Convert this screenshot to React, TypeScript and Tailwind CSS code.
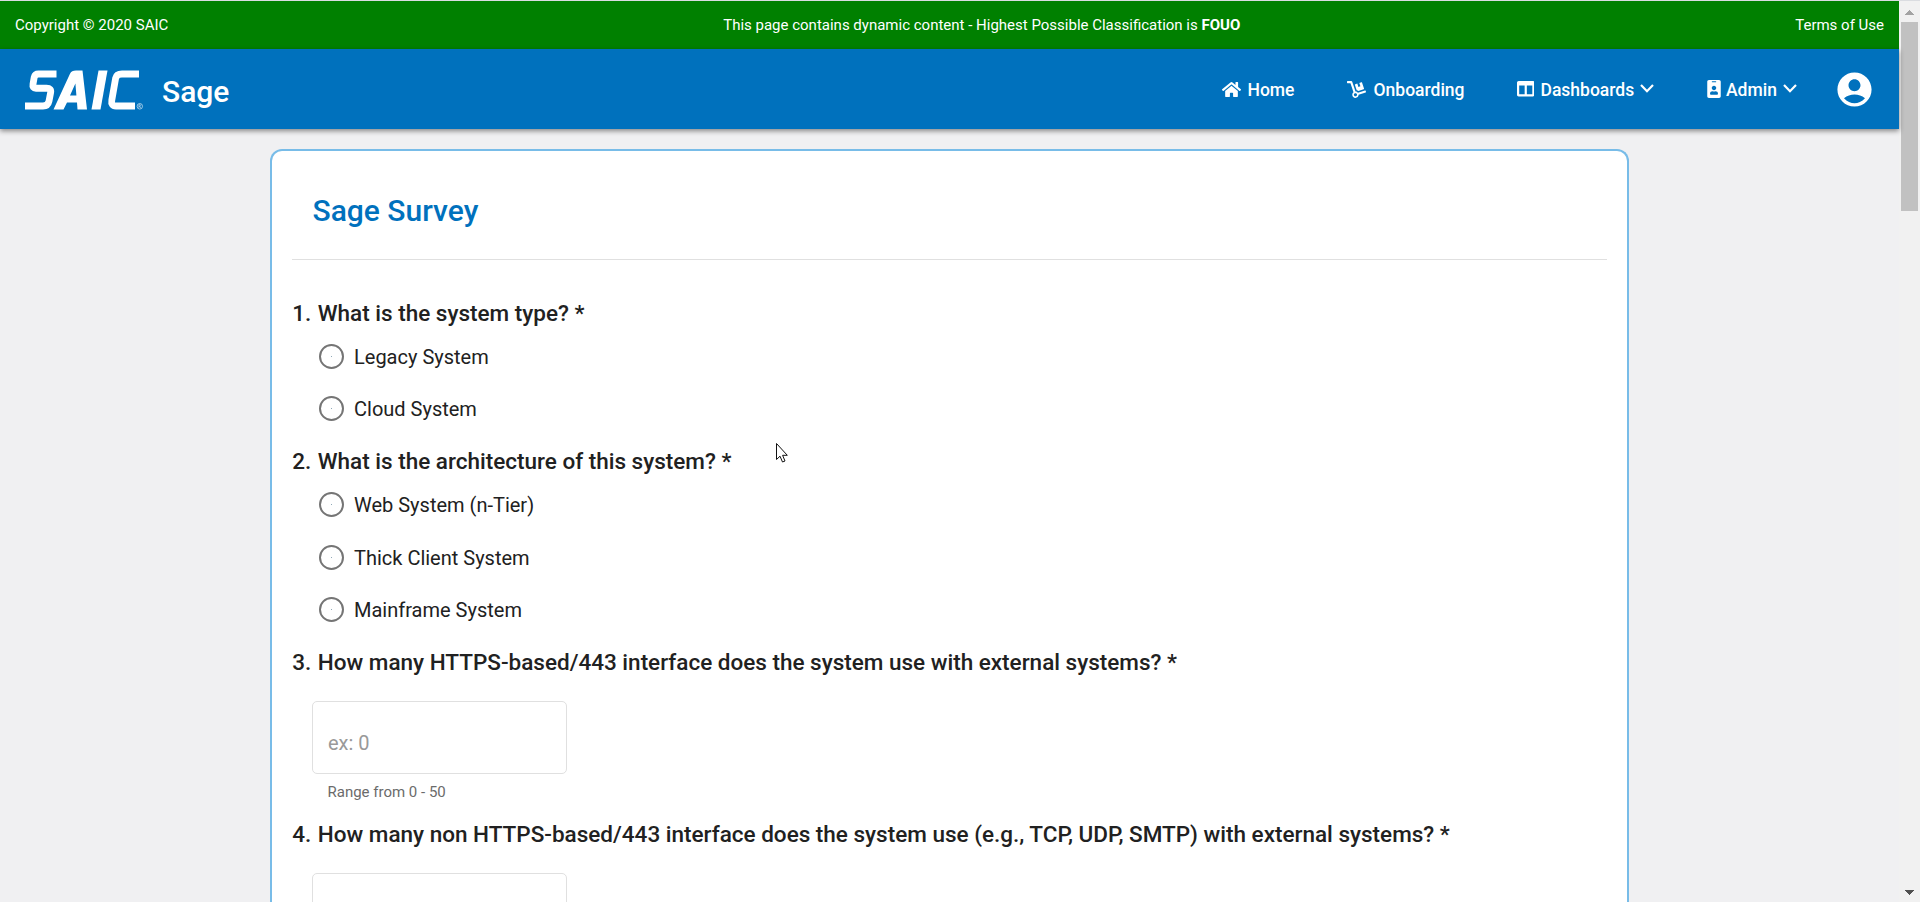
import { ReactNode } from "react";
import { FaHome, FaDolly, FaColumns, FaIdBadge } from "react-icons/fa";
import { MdAccountCircle } from "react-icons/md";

function Chevron() {
  return (
    <svg className="ml-[6px]" width="14" height="10" viewBox="0 0 14 10" fill="none" stroke="currentColor" strokeWidth="2.2">
      <path d="M1 1 L7 7.2 L13 1" />
    </svg>
  );
}

function Logo() {
  return (
    <svg className="mt-[3px]" width="122" height="43.5" viewBox="0 0 122 42" preserveAspectRatio="none" fill="none" stroke="#fff">
      <path d="M32.500 4.900H14.500Q11 4.900 10.200 8L9 14.500Q8.200 18.500 12 18.500H22.500Q27.600 18.500 26.600 23L25 31Q24 35.700 19 35.700H1" strokeWidth="6.800" />
      <path fill="#fff" stroke="none" fillRule="evenodd" d="M29.500 39L46 4.500Q47.500 1.500 52 1.500H58.500L63 39H53.500L53 32.300H43L39.500 39ZM46 25.500H52.400L51.400 14Z" />
      <path fill="#fff" stroke="none" d="M74.500 1.500H83.500L76.500 39H67.500Z" />
      <path d="M115 4.900H98Q92.500 4.900 91.600 9L87.800 30Q86.800 35.700 92 35.700H111" strokeWidth="6.800" />
      <circle cx="115.800" cy="36" r="2.700" strokeWidth="0.700" opacity="0.800" />
      <path d="M114.900 37.700V34.500H116.200Q117 35.300 116 36H114.900M116 36L116.800 37.700" strokeWidth="0.600" opacity="0.800" />
    </svg>
  );
}

function Radio({ label }: { label: string }) {
  return (
    <label className="flex h-[52.5px] items-start pl-[27px] pt-[5.8px]">
      <span className="flex size-[25px] shrink-0 items-center justify-center rounded-full border-2 border-[#757575]">
        <span className="size-px bg-[#8fa9b8]" />
      </span>
      <span className="ml-[10px] text-[20px] leading-[26px] text-[#212121]">{label}</span>
    </label>
  );
}

function Question({ n, title, children }: { n: number; title: string; children?: ReactNode }) {
  return (
    <section>
      <h2 className="flex h-[43.2px] whitespace-nowrap pt-[4px] text-[22.5px] font-medium leading-[28px] text-[#212121]">
        <span className="w-[25.800px] shrink-0 pl-[0.300px]">{n}.</span>
        <span>{title}</span>
      </h2>
      {children}
    </section>
  );
}

function NumberField() {
  return (
    <div className="ml-5 flex h-[128.8px] flex-col pt-[14px]">
      <input
        placeholder="ex: 0"
        className="h-[73px] w-[255px] shrink-0 rounded-[5px] border border-[#e0e0e0] px-[15px] pt-[10px] text-[20px] text-[#212121] placeholder:text-[#999]"
      />
      <span className="pl-[15.5px] pt-[8px] text-[15px] leading-5 text-[#6b6b6b]">Range from 0 - 50</span>
    </div>
  );
}

export default function App() {
  return (
    <div className="flex h-[902px] w-[1920px] flex-col overflow-hidden border-t border-[#dadce0] bg-[#f0f0f2] font-['Roboto',sans-serif]">
      <div className="flex min-h-0 flex-1">
        <div className="flex w-[1899px] flex-col">
          <div className="flex h-[48px] shrink-0 items-center justify-between bg-[#008000] px-[15px] text-[15px] text-white">
            <span>Copyright © 2020 SAIC</span>
            <span>
              This page contains dynamic content - Highest Possible Classification is <b>FOUO</b>
            </span>
            <span>Terms of Use</span>
          </div>
          <header className="z-10 flex h-[80px] shrink-0 items-center bg-[#0071bd] pl-[24px] text-white shadow-[0_2px_5px_rgba(0,0,0,0.45)]">
            <Logo />
            <span className="ml-[16px] mt-[4px] text-[30px] font-medium">Sage</span>
            <nav className="ml-auto flex items-center text-[17.5px] font-medium">
              <a className="flex w-[125px] items-center"><FaHome size={19} className="mr-[6.5px]" /><span className="pt-[2px]">Home</span></a>
              <a className="flex w-[169.5px] items-center"><FaDolly size={19} className="mr-[7.5px]" /><span className="pt-[2px]">Onboarding</span></a>
              <a className="flex w-[188.5px] items-center"><FaColumns size={17.5} className="mr-[6.5px]" /><span className="pt-[2px]">Dashboards</span><Chevron /></a>
              <a className="flex w-[129px] items-center"><FaIdBadge size={18} className="mr-[3px]" /><span className="pt-[2px]">Admin</span><Chevron /></a>
              <MdAccountCircle size={41} className="mr-[24px]" />
            </nav>
          </header>
          <main className="ml-[270px] mt-[20px] w-[1359px] flex-1 overflow-hidden rounded-t-[12px] border-2 border-b-0 border-[#78bce8] bg-white px-5">
            <div className="mb-[35px] flex h-[109px] items-center border-b border-[#e0e0e0] pl-[20.5px] pt-[10px]">
              <h1 className="text-[30px] font-medium text-[#0071bd]">Sage Survey</h1>
            </div>
            <Question n={1} title="What is the system type? *">
              <Radio label="Legacy System" />
              <Radio label="Cloud System" />
            </Question>
            <Question n={2} title="What is the architecture of this system? *">
              <Radio label="Web System (n-Tier)" />
              <Radio label="Thick Client System" />
              <Radio label="Mainframe System" />
            </Question>
            <Question n={3} title="How many HTTPS-based/443 interface does the system use with external systems? *">
              <NumberField />
            </Question>
            <Question n={4} title="How many non HTTPS-based/443 interface does the system use (e.g., TCP, UDP, SMTP) with external systems? *">
              <div className="ml-5 pt-[14px]">
                <div className="h-[73px] w-[255px] rounded-[5px] border border-[#e0e0e0]" />
              </div>
            </Question>
          </main>
        </div>
        <div className="flex w-[21px] flex-col items-center bg-[#f1f1f1]">
          <svg width="21" height="21" shapeRendering="crispEdges"><path d="M6 14H15L10.5 9Z" fill="#a3a3a3" /></svg>
          <div className="h-[189px] w-[17px] bg-[#c1c1c1]" />
          <svg className="mt-auto" width="21" height="21" shapeRendering="crispEdges"><path d="M6 9H15L10.5 14Z" fill="#505050" /></svg>
        </div>
      </div>
      <svg className="absolute left-[775px] top-[442px]" width="14" height="22" viewBox="0 0 14 22">
        <path d="M1.5 1.5V17.5L5 14.2L7.5 20L10 19L7.6 13.3H12.3Z" fill="#fff" stroke="#111" strokeWidth="1" />
      </svg>
    </div>
  );
}
